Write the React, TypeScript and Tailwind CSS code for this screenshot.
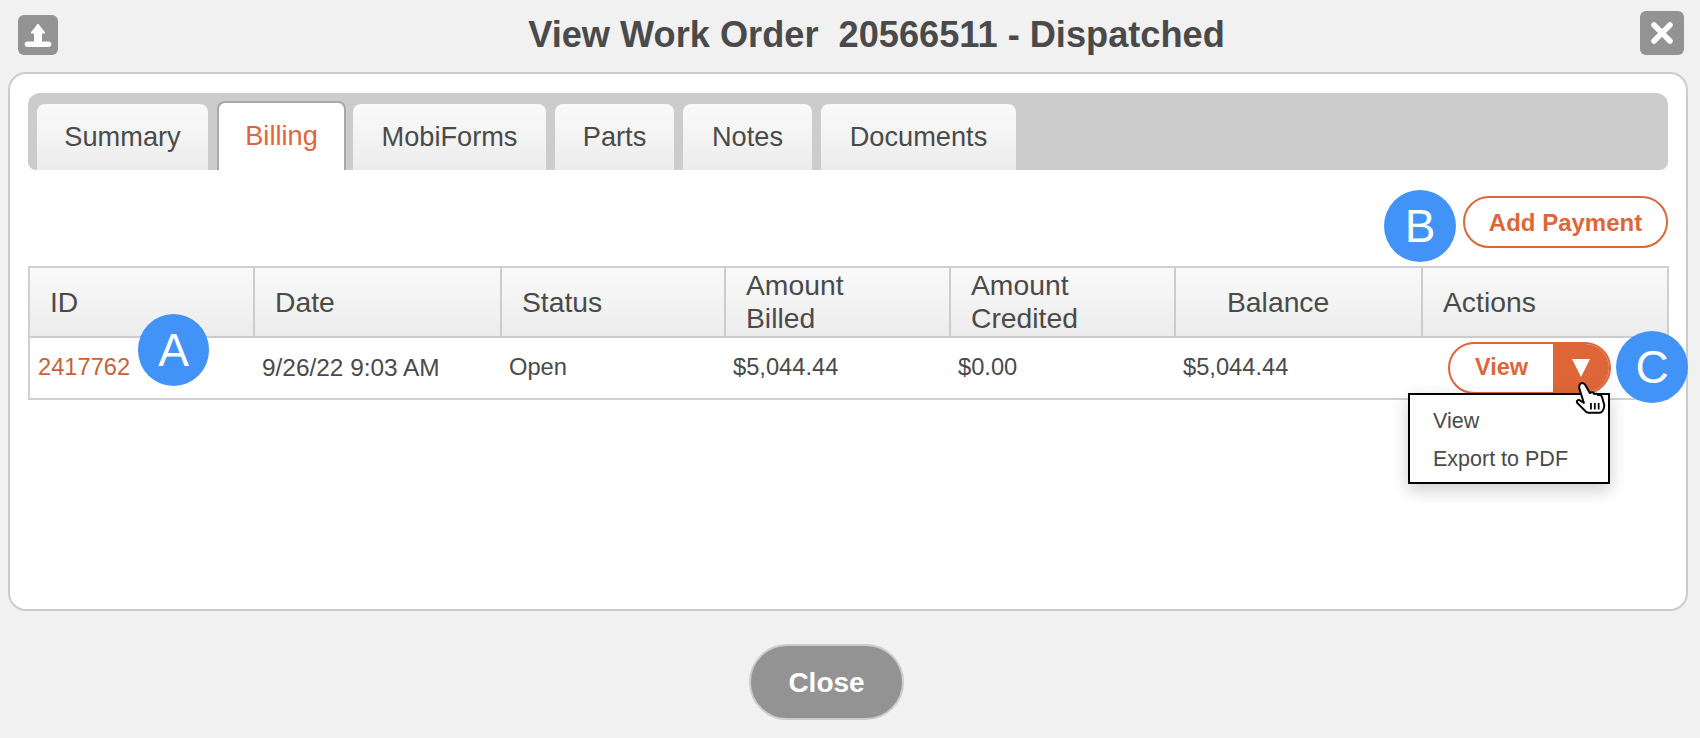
const tabs = ["Summary", "Billing", "MobiForms", "Parts", "Notes", "Documents"];

const tabWidths: Record<string, string> = {
  Summary: "w-[171px]",
  Billing: "w-[129px] mr-[-2px]",
  MobiForms: "w-[193px]",
  Parts: "w-[119px]",
  Notes: "w-[129px]",
  Documents: "w-[195px]",
};

const columns = [
  { label: "ID", cls: "w-[225px]" },
  { label: "Date", cls: "w-[247px]" },
  { label: "Status", cls: "w-[224px]" },
  { label: "Amount Billed", cls: "w-[225px]" },
  { label: "Amount Credited", cls: "w-[225px]" },
  { label: "Balance", cls: "w-[247px] pl-[51px]" },
  { label: "Actions", cls: "flex-1" },
];

const cells = [
  { value: "9/26/22 9:03 AM", cls: "w-[247px] text-[24.4px]" },
  { value: "Open", cls: "w-[224px]" },
  { value: "$5,044.44", cls: "w-[225px]" },
  { value: "$0.00", cls: "w-[225px]" },
  { value: "$5,044.44", cls: "w-[247px]" },
];

function Callout({ letter, className }: { letter: string; className: string }) {
  return (
    <div
      className={`absolute flex h-[72px] w-[72px] items-center justify-center rounded-full bg-[#4293f8] text-[46px] text-white ${className}`}
    >
      {letter}
    </div>
  );
}

// macOS style pointing hand
function HandCursor({ className }: { className: string }) {
  return (
    <svg className={className} width="33" height="33" viewBox="0 0 30 30" fill="white" stroke="black" strokeWidth="1.8" strokeLinejoin="round">
      <path d="M5 1.500c1.500-1 3.500-.5 4.500 1.500L13.500 10l1-.5c1.500-.5 2.500 0 3 1.500 1.500-.8 3-.3 3.500 1 1.500-.7 3 0 3.500 1.500l2 7c.5 3-1.500 7.500-4 7.500H12c-2 0-3-2-4-3L2 19c-1-2 1-3.500 3-2l3 2L4 6C3.500 4 4 2.500 5 1.500Z" />
      <path d="M14.500 19v6M18 19v6M21.500 19v6" fill="none" strokeWidth="1.600" />
    </svg>
  );
}

export default function App() {
  return (
    <div className="h-[738px] w-[1700px] overflow-hidden bg-[#f1f1f1] font-['Liberation_Sans',Arial,sans-serif] text-[#4a4a4a]">
      <div className="flex h-[72px] items-start justify-between pl-[18px] pr-[16px] pt-[15px]">
        <button className="flex h-[40px] w-[40px] items-center justify-center rounded-md bg-[#949394]">
          <svg width="28" height="28" viewBox="0 0 28 28" fill="white" stroke="white" strokeWidth="1" strokeLinejoin="round">
            <path d="M14 3 L21 12 H17.500 V21 H10.500 V12 H7 Z" />
            <rect x="1" y="21" width="26" height="4.500" rx="2.250" />
          </svg>
        </button>
        <h1 className="ml-[55px] whitespace-pre text-[36.2px] font-bold leading-[40px]">View Work Order  20566511 - Dispatched</h1>
        <button className="mt-[-4px] flex h-[44px] w-[44px] items-center justify-center rounded-md bg-[#949394]">
          <svg width="26" height="26" viewBox="0 0 26 26" fill="none">
            <path d="M5 5 L21 21 M21 5 L5 21" stroke="white" strokeWidth="5.500" strokeLinecap="round" />
          </svg>
        </button>
      </div>

      <div className="ml-[8px] h-[539px] w-[1680px] rounded-[18px] border-2 border-[#cccccc] bg-white px-[18px] pt-[19px]">
        <div className="flex h-[77px] items-end gap-[9px] rounded-t-[12px] rounded-b-[8px] bg-[#cccccc] pl-[9px]">
          {tabs.map((tab) => {
            const active = tab === "Billing";
            return (
              <div
                key={tab}
                className={`flex items-center justify-center rounded-t-lg text-[27.2px] ${tabWidths[tab]} ${
                  active
                    ? "relative h-[69px] border-2 border-b-0 border-[#a8a8a8] bg-white text-[#de6638]"
                    : "h-[66px] bg-gradient-to-b from-[#fafafa] to-[#ececec]"
                }`}
              >
                {tab}
              </div>
            );
          })}
        </div>

        <div className="relative mt-[26px] flex justify-end">
          <button className="h-[52px] w-[205px] rounded-full border-2 border-[#de6638] pt-[1px] text-[24px] font-bold text-[#de6638]">
            Add Payment
          </button>
          <Callout letter="B" className="left-[1356px] top-[-6px]" />
        </div>

        <div className="relative mt-[18px] w-[1641px] border-2 border-[#d0d0d0]">
          <div className="flex h-[70px] border-b-2 border-[#cccccc] bg-gradient-to-b from-[#fafafa] to-[#ececec]">
            {columns.map((c, i) => (
              <div
                key={c.label}
                className={`flex items-center text-[28.3px] leading-[33px] ${c.cls} ${i === 5 ? "" : "pl-[20px]"} ${
                  i < 6 ? "border-r-2 border-[#cccccc]" : ""
                }`}
              >
                <span className={c.label.startsWith("Amount") ? "w-[120px]" : ""}>{c.label}</span>
              </div>
            ))}
          </div>
          <div className="flex h-[60px] items-center text-[23.7px]">
            <div className="w-[225px] pl-[8px] text-[#c8623a]">2417762</div>
            {cells.map((c) => (
              <div key={c.cls + c.value} className={`${c.cls} pl-[7px]`}>
                {c.value}
              </div>
            ))}
            <div className="flex-1 pl-[25px]">
              <div className="flex h-[52px] w-[163px] overflow-hidden rounded-full border-2 border-[#de6638]">
                <span className="flex flex-1 items-center justify-center text-[23.5px] font-bold text-[#de6638]">View</span>
                <span className="flex w-[56px] items-center justify-center bg-[#de6638]">
                  <svg width="20" height="20" viewBox="0 0 20 20">
                    <path d="M1 1 H19 L10 19 Z" fill="white" />
                  </svg>
                </span>
              </div>
            </div>
          </div>

          <Callout letter="A" className="left-[108px] top-[46px] !h-[72px] !w-[71px]" />
          <Callout letter="C" className="left-[1586px] top-[63px]" />

          <div className="absolute left-[1378px] top-[125px] h-[91px] w-[202px] border-2 border-black bg-white pl-[23px] pt-[7px] text-[21.5px] leading-[38px] shadow-[0_6px_16px_rgba(0,0,0,0.2)]">
            <div>View</div>
            <div>Export to PDF</div>
          </div>
          <HandCursor className="absolute left-[1545px] top-[114px]" />
        </div>
      </div>

      <div className="ml-[749px] mt-[33px]">
        <button className="h-[76px] w-[155px] rounded-full border-2 border-[#cccccc] bg-[#949394] pt-[1px] text-[28px] font-bold text-white">
          Close
        </button>
      </div>
    </div>
  );
}
